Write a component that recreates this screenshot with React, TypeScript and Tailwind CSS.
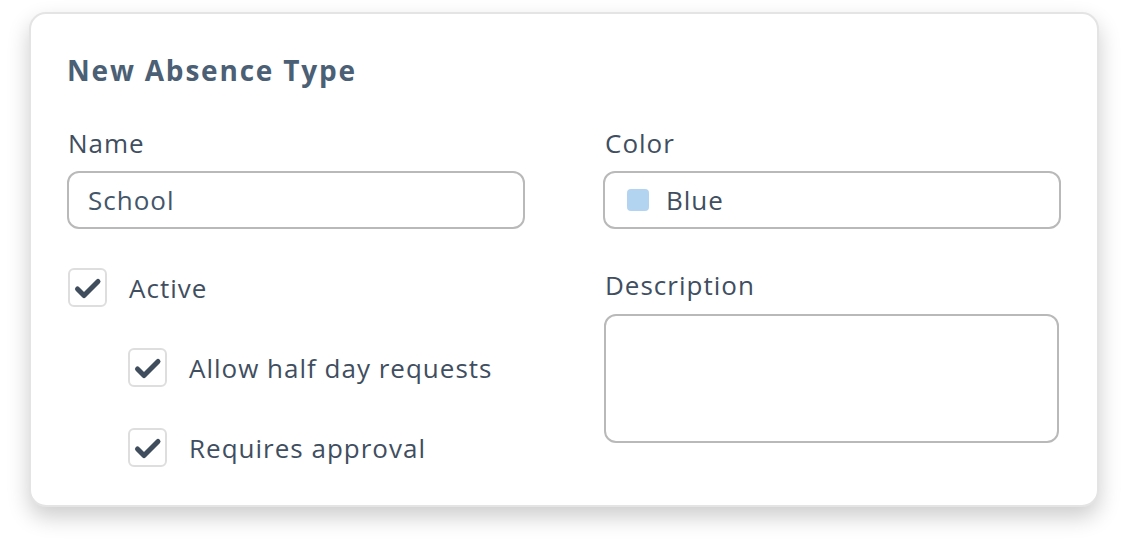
import React from "react";

function Check({ label, indent }: { label: string; indent?: boolean }) {
  return (
    <div className={`flex items-center gap-[22px] ${indent ? "pl-[61px]" : "pl-[1px]"}`}>
      <div className="w-[39px] h-[39px] rounded-[6px] border-2 border-[#dedede] bg-white flex items-center justify-center shrink-0">
        <svg width="35" height="35" viewBox="0 0 35 35" fill="none">
          <polyline
            points="7.5,19 14,25.5 28,11.5"
            stroke="#3f4d5d"
            strokeWidth="5"
            strokeLinecap="round"
            strokeLinejoin="round"
          />
        </svg>
      </div>
      <span className="text-[26px] leading-[36px] text-[#3f4e60] tracking-[1px]">{label}</span>
    </div>
  );
}

export default function App() {
  return (
    <div
      className="w-[1128px] h-[552px] bg-white pl-[29px] pt-[12px]"
      style={{ fontFamily: "'Open Sans', 'Noto Sans', sans-serif" }}
    >
      <div className="w-[1070px] h-[495px] rounded-[17px] border-2 border-[#e4e4e4] bg-white shadow-[0_10px_22px_rgba(0,0,0,0.2)] px-[36px] pt-[38px]">
        <h1 className="text-[28px] leading-[36px] font-bold text-[#4b5f75] tracking-[1.8px]">New Absence Type</h1>
        <div className="grid grid-cols-2 gap-x-[78px] mt-[37px]">
          <div className="flex flex-col">
            <label className="text-[26px] leading-[36px] text-[#3f4e60] pl-[1px] tracking-[1px]">Name</label>
            <div className="mt-[10px] h-[58px] rounded-[12px] border-2 border-[#b9b9b9] flex items-center pl-[19px]">
              <span className="text-[26px] text-[#44566a] tracking-[1px]">School</span>
            </div>
            <div className="flex flex-col gap-[41px] mt-[39px]">
              <Check label="Active" />
              <Check label="Allow half day requests" indent />
              <Check label="Requires approval" indent />
            </div>
          </div>
          <div className="flex flex-col">
            <label className="text-[26px] leading-[36px] text-[#3f4e60] pl-[2px] tracking-[1px]">Color</label>
            <div className="mt-[10px] h-[58px] rounded-[12px] border-2 border-[#b9b9b9] flex items-center pl-[22px] gap-[17px]">
              <span className="w-[22px] h-[22px] rounded-[4px] bg-[#b3d4f1]" />
              <span className="text-[26px] text-[#3f4e60] tracking-[1px]">Blue</span>
            </div>
            <label className="mt-[38px] text-[26px] leading-[36px] text-[#3f4e60] pl-[2px] tracking-[1px]">Description</label>
            <div className="mt-[11px] ml-[1px] mr-[2px] h-[129px] rounded-[12px] border-2 border-[#b9b9b9]" />
          </div>
        </div>
      </div>
    </div>
  );
}
